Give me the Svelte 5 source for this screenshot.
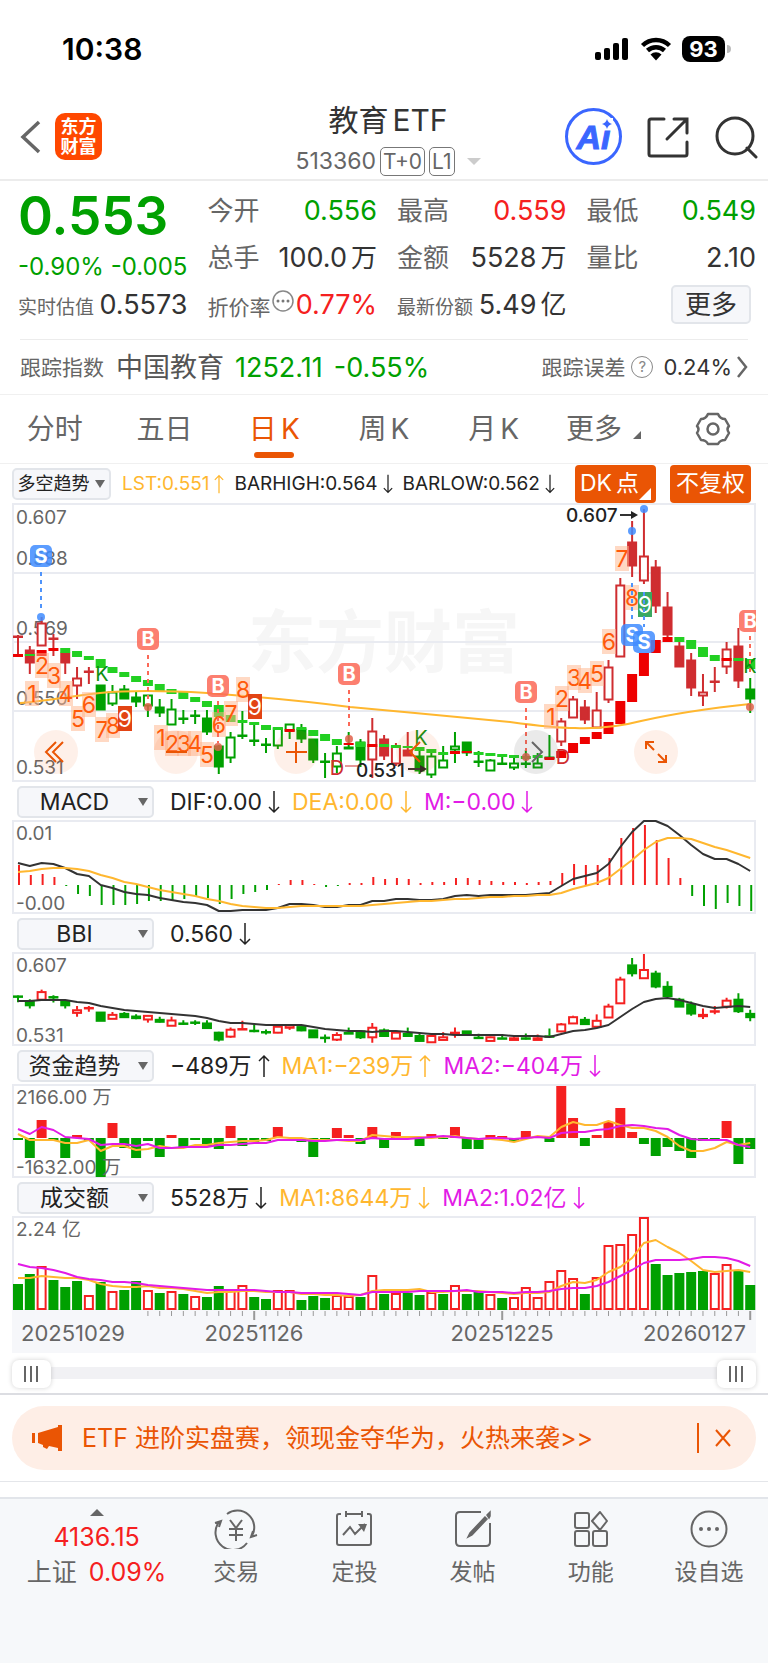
<script lang="ts">
  type Kind = 'r' | 'o' | 'g' | 'h';
  type Candle = [Kind, number, number, number, number, 'R' | 'G', number, number];

  // kind, high, body top, body bottom, low, trend colour, trend top, trend bottom
  const candles: Candle[] = [
    ['r', 132, 133, 134, 152, 'R', 151, 154],
    ['r', 143, 147, 160, 171, 'G', 151, 153],
    ['o', 114, 120, 143, 143, 'R', 147, 153],
    ['r', 131, 135, 136, 153, 'R', 145, 148],
    ['r', 147, 150, 160, 171, 'G', 145, 150],
    ['o', 164, 175, 183, 196, 'G', 148, 154],
    ['r', 164, 168, 169, 181, 'G', 153, 157],
    ['g', 182, 182, 207, 207, 'G', 156, 165],
    ['h', 182, 189, 201, 203, 'G', 164, 170],
    ['g', 182, 186, 196, 196, 'G', 169, 174],
    ['g', 189, 194, 199, 204, 'G', 173, 179],
    ['h', 192, 192, 203, 214, 'G', 177, 183],
    ['g', 196, 204, 210, 214, 'G', 181, 188],
    ['h', 196, 206, 222, 222, 'G', 186, 191],
    ['g', 207, 215, 216, 221, 'G', 189, 196],
    ['g', 207, 212, 213, 221, 'G', 194, 199],
    ['g', 207, 215, 229, 232, 'G', 198, 204],
    ['g', 242, 243, 264, 271, 'G', 202, 214],
    ['h', 229, 234, 255, 260, 'G', 212, 219],
    ['g', 208, 232, 233, 236, 'G', 217, 220],
    ['g', 219, 237, 238, 243, 'G', 219, 222],
    ['g', 235, 241, 242, 250, 'G', 222, 227],
    ['h', 225, 225, 243, 246, 'G', 224, 227],
    ['h', 221, 221, 228, 236, 'R', 226, 229],
    ['g', 221, 226, 236, 240, 'G', 224, 227],
    ['g', 236, 236, 257, 260, 'G', 227, 233],
    ['g', 250, 258, 259, 275, 'G', 231, 238],
    ['h', 243, 250, 264, 270, 'G', 236, 242],
    ['g', 229, 244, 246, 246, 'R', 240, 242],
    ['g', 236, 239, 257, 264, 'G', 239, 244],
    ['o', 215, 228, 257, 275, 'R', 241, 244],
    ['r', 232, 236, 253, 257, 'G', 241, 244],
    ['o', 240, 243, 261, 263, 'G', 242, 245],
    ['r', 229, 247, 253, 253, 'G', 243, 245],
    ['g', 247, 253, 268, 271, 'G', 244, 248],
    ['h', 250, 253, 272, 275, 'G', 246, 250],
    ['h', 243, 257, 265, 265, 'G', 249, 252],
    ['h', 229, 243, 247, 260, 'R', 248, 251],
    ['g', 239, 239, 250, 253, 'R', 248, 250],
    ['g', 248, 258, 259, 264, 'G', 249, 252],
    ['h', 256, 257, 268, 268, 'G', 250, 253],
    ['g', 251, 260, 261, 262, 'G', 251, 254],
    ['h', 253, 260, 265, 267, 'G', 252, 255],
    ['g', 247, 260, 261, 265, 'G', 253, 256],
    ['h', 250, 260, 265, 265, 'G', 252, 255],
    ['g', 232, 254, 255, 256, 'R', 254, 257],
    ['o', 215, 218, 239, 243, 'R', 248, 255],
    ['o', 193, 196, 215, 215, 'R', 240, 250],
    ['r', 197, 204, 217, 221, 'R', 234, 241],
    ['o', 189, 207, 225, 225, 'R', 229, 236],
    ['o', 157, 164, 197, 200, 'R', 219, 231],
    ['o', 75, 82, 154, 154, 'R', 198, 221],
    ['r', 18, 39, 63, 74, 'R', 171, 199],
    ['o', 6, 53, 78, 81, 'R', 150, 173],
    ['r', 57, 64, 103, 110, 'R', 137, 150],
    ['r', 89, 104, 132, 134, 'R', 134, 139],
    ['r', 139, 143, 164, 164, 'G', 134, 139],
    ['r', 150, 157, 185, 193, 'G', 137, 146],
    ['o', 171, 189, 193, 203, 'G', 144, 154],
    ['r', 164, 178, 179, 189, 'G', 152, 158],
    ['o', 139, 146, 164, 171, 'R', 155, 158],
    ['r', 125, 143, 178, 185, 'G', 155, 158],
    ['g', 175, 186, 196, 210, 'G', 156, 166]
  ];
  // dojis that closed up
  const risingDojis = [6, 19, 59];

  const step = 11.81;
  const cx = (i: number) => 6 + i * step;
  const line = (ys: number[]) => ys.map((y, i) => `${cx(i).toFixed(1)},${y}`).join(' ');
  const smallY = (y: number) => y * 0.33;

  const counts: [string, number, number, string][] = [
    ['1', 20, 190, ''], ['2', 30, 162, ''], ['3', 42, 172, ''], ['4', 54, 190, ''], ['5', 66, 215, ''],
    ['6', 77, 201, ''], ['7', 90, 226, ''], ['8', 101, 222, ''], ['9', 113, 215, 'top'],
    ['1', 149, 234, ''], ['2', 160, 240, ''], ['3', 172, 240, ''], ['4', 183, 240, ''], ['5', 195, 251, ''],
    ['6', 207, 221, ''], ['7', 219, 210, ''], ['8', 231, 186, ''], ['9', 243, 203, 'top'],
    ['1', 539, 213, ''], ['2', 550, 195, ''], ['3', 562, 174, ''], ['4', 573, 177, ''], ['5', 585, 170, ''],
    ['6', 597, 138, ''], ['7', 610, 55, ''], ['8', 620, 94, ''], ['9', 633, 101, 'low']
  ];

  // letter, x, badge centre, dash start, dash end, dot
  const signals: [string, number, number, number, number, number][] = [
    ['S', 29, 53, 69, 106, 114],
    ['B', 136, 136, 152, 198, 204],
    ['B', 206, 183, 198, 240, 244],
    ['B', 337, 171, 187, 226, 236],
    ['B', 514, 189, 205, 248, 254],
    ['B', 738, 118, 133, 170, 204],
    ['S', 620, 132, 80, 118, 28],
    ['S', 632, 139, 89, 124, 6]
  ];

  const tools: [string, number, string][] = [
    ['快退', 44, 'M22 12 12 22l10 10M29 12 19 22l10 10'],
    ['缩小', 164, 'M12 22h21'],
    ['放大', 284, 'M12 22h21M22 12v21'],
    ['左移', 406, 'M24 12 14 22l10 10'],
    ['右移', 524, 'M18 12l10 10-10 10'],
    ['全屏', 644, 'M20 20 12 12M12 19v-7h8M24 24l8 8M32 25v7h-8']
  ];

  const macd = [20, 10, 11, 8, -1, -9, -11, -20, -20, -20, -19, -16, -16, -15, -14, -12, -13, -19, -14, -9, -7, -5, 1, 5, 5, 1, -2, -1, 2, 2, 8, 6, 7, 6, 2, 3, 3, 7, 7, 5, 4, 3, 3, 2, 3, 4, 12, 21, 20, 20, 27, 47, 57, 60, 45, 27, 7, -11, -21, -24, -18, -21, -26];
  const dif = [43, 46, 43, 44, 48, 54, 56, 65, 68, 72, 74, 75, 78, 80, 82, 83, 85, 91, 91, 90, 90, 90, 88, 84, 84, 85, 87, 87, 85, 85, 81, 81, 79, 79, 80, 80, 79, 76, 75, 76, 75, 75, 75, 75, 74, 73, 66, 59, 56, 53, 44, 27, 12, 1, 1, 6, 15, 25, 34, 39, 39, 44, 51];
  const dea = [52, 51, 49, 48, 48, 49, 51, 55, 58, 62, 64, 67, 70, 72, 74, 76, 79, 81, 84, 86, 87, 88, 88, 87, 86, 86, 86, 86, 86, 86, 85, 84, 83, 82, 81, 81, 80, 79, 79, 78, 77, 77, 76, 76, 75, 75, 73, 69, 66, 63, 58, 49, 40, 30, 22, 18, 18, 19, 23, 27, 30, 34, 38];
  const bbi = [49, 49, 48, 48, 48, 50, 51, 54, 56, 58, 59, 60, 61, 62, 63, 64, 66, 69, 71, 71, 72, 73, 73, 73, 73, 75, 77, 78, 79, 79, 80, 79, 79, 80, 81, 82, 82, 83, 83, 83, 83, 83, 84, 84, 84, 85, 82, 79, 78, 76, 73, 65, 57, 50, 47, 46, 48, 51, 54, 56, 55, 54, 55];
  const flow = [-2, -20, 18, -3, -20, 3, -3, -39, 15, -10, -20, -3, -19, 3, -10, -2, -8, -11, 12, -8, -4, -3, 11, 1, -4, -19, -2, 10, 3, -6, 11, -10, 6, -1, -8, 4, -1, 11, -11, -11, 3, 2, -3, 7, 1, -4, 52, 20, -8, 3, 16, 30, 6, -6, -18, -9, -13, -20, -3, -3, 17, -26, -11];
  const flowMa1 = [50, 56, 56, 56, 59, 59, 56, 67, 62, 62, 66, 65, 62, 64, 64, 61, 61, 59, 58, 57, 57, 56, 53, 54, 54, 56, 56, 56, 57, 57, 51, 52, 53, 53, 53, 54, 53, 52, 54, 55, 55, 56, 58, 55, 52, 53, 43, 38, 41, 41, 37, 41, 44, 44, 47, 53, 62, 67, 67, 64, 58, 61, 59];
  const flowMa2 = [45, 50, 43, 46, 53, 54, 55, 61, 60, 60, 62, 60, 64, 64, 63, 63, 63, 61, 61, 60, 59, 59, 56, 56, 56, 57, 57, 56, 56, 56, 54, 55, 55, 55, 54, 53, 52, 53, 54, 55, 54, 54, 55, 54, 53, 54, 49, 48, 48, 46, 45, 42, 41, 42, 44, 45, 51, 55, 56, 56, 56, 61, 63];
  // turnover, positive = up day, negative = down day
  const volume = [-26, -36, 44, -30, -23, -29, 15, -28, 19, -20, -29, 20, -17, 19, -16, 14, -13, -24, 20, 25, -13, -11, 20, 20, -10, -14, -12, 15, 14, -13, 35, -16, 17, -17, -15, 18, -16, 25, -16, -18, 16, -12, 13, 23, 13, 29, 40, 32, -16, 33, 65, 66, 76, 93, -46, -35, -37, -38, -39, 37, 46, -40, -25];
  const volMa1 = [62, 62, 60, 61, 62, 62, 64, 68, 70, 71, 71, 70, 72, 72, 73, 75, 77, 76, 76, 75, 75, 76, 76, 76, 78, 78, 79, 79, 80, 79, 75, 74, 74, 74, 73, 76, 76, 75, 75, 75, 76, 77, 78, 77, 77, 76, 70, 66, 67, 64, 56, 51, 42, 27, 24, 31, 37, 45, 54, 56, 55, 54, 56];
  const volMa2 = [48, 51, 52, 54, 57, 61, 63, 64, 66, 66, 67, 69, 70, 71, 72, 73, 74, 74, 74, 74, 74, 75, 76, 76, 77, 77, 77, 77, 78, 79, 76, 76, 76, 76, 75, 75, 75, 75, 74, 76, 76, 76, 77, 76, 76, 75, 73, 72, 72, 70, 66, 60, 54, 47, 44, 44, 44, 43, 41, 41, 42, 45, 50];

  const tabs = [['分时', ''], ['五日', ''], ['日', 'K'], ['周', 'K'], ['月', 'K']];
  let active = 2;
</script>

{#snippet arrow(dir: string)}
  <svg class="arrow" class:up={dir === 'up'} viewBox="0 0 12 24" aria-hidden="true"><path d="M6 1v21M1 17l5 5 5-5" /></svg>
{/snippet}

{#snippet picker(name: string)}
  <span class="picker">
    <select aria-label="指标"><option>{name}</option></select>
  </span>
{/snippet}

<div class="page">
  <div class="status">
    <span class="clock">10:38</span>
    <div class="status-icons">
      <svg width="36" height="24" viewBox="0 0 36 24" aria-hidden="true">
        <rect x="1" y="15" width="6" height="8" rx="2" /><rect x="10" y="11" width="6" height="12" rx="2" />
        <rect x="19" y="6" width="6" height="17" rx="2" /><rect x="28" y="1" width="6" height="22" rx="2" />
      </svg>
      <svg width="32" height="24" viewBox="0 0 32 24" aria-hidden="true">
        <path d="M2.500 8.500a19.500 19.500 0 0 1 27 0M7.500 13.500a12.500 12.500 0 0 1 17 0" fill="none" stroke="#000" stroke-width="4.500" />
        <path d="M10.500 17.500a8 8 0 0 1 11 0L16 23.500z" />
      </svg>
      <span class="battery">93</span>
    </div>
  </div>

  <header>
    <div class="side">
      <button class="plain" aria-label="返回">
        <svg width="24" height="36" viewBox="0 0 24 36"><path d="M21 3 5 18l16 15" fill="none" stroke="#666" stroke-width="3.500" /></svg>
      </button>
      <span class="logo">东方<br />财富</span>
    </div>
    <div class="title">
      <h1>教育<em>ETF</em></h1>
      <p>513360 <span class="tag">T+0</span><span class="tag">L1</span><i class="down"></i></p>
    </div>
    <div class="side end">
      <button class="plain ai" aria-label="Ai">
        <span>Ai</span>
        <svg class="spark" width="12" height="12" viewBox="0 0 12 12"><path d="M6 1q1 4 5 5-4 1-5 5-1-4-5-5 4-1 5-5z" /></svg>
      </button>
      <button class="plain" aria-label="分享">
        <svg width="44" height="44" viewBox="0 0 44 44" fill="none" stroke="#333" stroke-width="3" stroke-linecap="round"><path d="M18 4H5q-2 0-2 2v33q0 2 2 2h34q2 0 2-2V27M28 4h13v14M40 5 21 24" /></svg>
      </button>
      <button class="plain" aria-label="搜索">
        <svg width="44" height="44" viewBox="0 0 44 44" fill="none" stroke="#333" stroke-width="3" stroke-linecap="round"><circle cx="21" cy="21" r="18" /><path d="m33 33 9 9" /></svg>
      </button>
    </div>
  </header>

  <section class="quote">
    <div class="grid">
      <div class="last">
        <strong>0.553</strong>
        <span class="green">-0.90% -0.005</span>
      </div>
      <div class="cell"><span>今开</span><b class="green">0.556</b></div>
      <div class="cell"><span>最高</span><b class="red">0.559</b></div>
      <div class="cell"><span>最低</span><b class="green">0.549</b></div>
      <div class="cell"><span>总手</span><b>100.0<em>万</em></b></div>
      <div class="cell"><span>金额</span><b>5528<em>万</em></b></div>
      <div class="cell"><span>量比</span><b>2.10</b></div>
      <div class="cell small"><span>实时估值</span><b>0.5573</b></div>
      <div class="cell small mid">
        <span>折价率</span>
        <svg class="dots" width="22" height="22" viewBox="0 0 22 22"><circle cx="11" cy="11" r="10" fill="none" stroke="#888" stroke-width="1.500" /><g fill="#777"><circle cx="6" cy="11" r="1.500" /><circle cx="11" cy="11" r="1.500" /><circle cx="16" cy="11" r="1.500" /></g></svg>
        <b class="red">0.77%</b>
      </div>
      <div class="cell small"><span>最新份额</span><b>5.49<em>亿</em></b></div>
      <div class="cell right"><button class="more">更多</button></div>
    </div>
    <div class="track">
      <span class="label">跟踪指数</span>
      <span class="index">中国教育</span>
      <span class="num green">1252.11</span>
      <span class="num green">-0.55%</span>
      <a href="#error" class="error">
        <span class="label">跟踪误差</span>
        <i class="help">?</i>
        <span>0.24%</span>
        <svg width="12" height="24" viewBox="0 0 12 24"><path d="m2 2 8 10-8 10" fill="none" stroke="#666" stroke-width="2.500" /></svg>
      </a>
    </div>
  </section>

  <nav class="tabs">
    {#each tabs as [name, suffix], i}
      <button class:active={active === i} on:click={() => (active = i)}>{name}{#if suffix}<em>{suffix}</em>{/if}</button>
    {/each}
    <button class="corner">更多</button>
    <button aria-label="设置">
      <svg width="36" height="36" viewBox="0 0 36 36" fill="none" stroke="#666" stroke-width="2.500"><path d="M13 3h10q2 5 7 5l4 7q-3 3 0 7l-4 7q-5 0-7 4H13q-2-4-7-4l-4-7q3-4 0-7l4-7q5 0 7-5z" stroke-linejoin="round" /><circle cx="18" cy="18" r="5.500" /></svg>
    </button>
  </nav>

  <div class="main-head">
    <span class="picker trend"><select aria-label="主图指标"><option>多空趋势</option></select></span>
    <div class="values">
      <span class="gold">LST:0.551{@render arrow('up')}</span>
      <span>BARHIGH:0.564{@render arrow('down')}</span>
      <span>BARLOW:0.562{@render arrow('down')}</span>
    </div>
    <button class="pill dk">DK<em>点</em></button>
    <button class="pill">不复权</button>
  </div>

  <main>
    <div class="kline">
      <svg class="chart" viewBox="0 0 744 279">
        <text class="watermark" x="236" y="164">东方财富</text>
        <g class="frame"><rect x="1" y="1" width="742" height="277" /><path d="M0 70h744M0 139h744M0 208h744" /></g>
        <g class="axis">
          <text x="4" y="21">0.607</text><text x="4" y="62">0.588</text><text x="4" y="132">0.569</text>
          <text x="4" y="202">0.550</text><text x="4" y="271">0.531</text>
        </g>
        {#each candles as [kind, high, top, bottom, low, trend, t0, t1], i}
          <g class="candle {kind}">
            <path d="M{cx(i)} {high}V{top}M{cx(i)} {bottom}V{low}" />
            <rect x={cx(i) - 4} y={top + 0.5} width="8" height={Math.max(bottom - top - 1, 0.5)} />
          </g>
          <rect class="bar {trend}" x={cx(i) - 5} y={t0} width="10" height={t1 - t0} />
        {/each}
        <path class="ma gold" d="M8 200C35 198 60 193 88 190C120 187 160 188 195 190C250 194 300 199 338 204C390 209 450 214 498 219C520 222 545 225 563 225C590 226 610 223 629 218C660 211 700 205 738 201" />
        {#each counts as [n, x, y, style]}
          <g class="count {style}"><rect x={x - 7} y={y - 12} width="14" height="25" /><text {x} y={y + 9}>{n}</text></g>
        {/each}
        <g class="mark"><text x="90" y="178">K</text><text x="409" y="242">K</text><text x="738" y="170">K</text></g>
        <g class="mark d"><text x="325" y="272">D</text><text x="551" y="261">D</text><path d="M333 263h13" /></g>
        {#each signals as [letter, x, y, d0, d1, dot]}
          <g class="signal {letter}">
            <path d="M{x} {d0}V{d1}" />
            <circle cx={x} cy={dot} r="4" />
            <rect x={x - 11} y={y - 11} width="22" height="22" rx="5" />
            <text {x} y={y + 7}>{letter}</text>
          </g>
        {/each}
        <g class="extreme">
          <text x="344" y="274">0.531</text><path d="M396 266h14" /><path class="tip" d="m408 262 7 4-7 4z" />
          <text x="554" y="19">0.607</text><path d="M608 12h14" /><path class="tip" d="m619 8 7 4-7 4z" />
        </g>
      </svg>
      {#each tools as [label, x, icon]}
        <button class="tool" class:grey={label === '右移'} aria-label={label} style="left: {(x / 744) * 100}%">
          <svg viewBox="0 0 44 44"><path d={icon} /></svg>
        </button>
      {/each}
    </div>

    <div class="sub-head">
      {@render picker('MACD')}
      <div class="values"><span>DIF:0.00{@render arrow('down')}</span><span class="gold">DEA:0.00{@render arrow('down')}</span><span class="pink">M:−0.00{@render arrow('down')}</span></div>
    </div>
    <svg class="chart" viewBox="0 0 744 94">
      <g class="frame"><rect x="1" y="1" width="742" height="92" /></g>
      {#each macd as v, i}
        <path class={v > 0 ? 'stick up' : 'stick'} d="M{cx(i) + 1} 65V{65 - v}" />
      {/each}
      <polyline class="ma" points={line(dif)} /><polyline class="ma gold" points={line(dea)} />
      <g class="axis"><text x="4" y="20">0.01</text><text x="4" y="90">-0.00</text></g>
    </svg>

    <div class="sub-head">
      {@render picker('BBI')}
      <div class="values"><span>0.560{@render arrow('down')}</span></div>
    </div>
    <svg class="chart" viewBox="0 0 744 94">
      <g class="frame"><rect x="1" y="1" width="742" height="92" /></g>
      {#each candles as [kind, high, top, bottom, low], i}
        {@const up = kind === 'o' || kind === 'h' || risingDojis.includes(i)}
        <g class="candle {up ? 'up' : 'g'}">
          <path d="M{cx(i)} {smallY(high)}V{smallY(top)}M{cx(i)} {smallY(bottom)}V{smallY(low)}" />
          <rect x={cx(i) - 4} y={smallY(top) + 0.5} width="8" height={Math.max(smallY(bottom) - smallY(top), 0.5)} />
        </g>
      {/each}
      <polyline class="ma" points={line(bbi)} />
      <g class="axis"><text x="4" y="20">0.607</text><text x="4" y="90">0.531</text></g>
    </svg>

    <div class="sub-head">
      {@render picker('资金趋势')}
      <div class="values"><span>−489万{@render arrow('up')}</span><span class="gold">MA1:−239万{@render arrow('up')}</span><span class="pink">MA2:−404万{@render arrow('down')}</span></div>
    </div>
    <svg class="chart" viewBox="0 0 744 94">
      <g class="frame"><rect x="1" y="1" width="742" height="92" /></g>
      {#each flow as v, i}
        <rect class={v > 0 ? 'fill-up' : 'fill-down'} x={cx(i) - 5} y={v > 0 ? 54 - v : 54} width="10" height={Math.abs(v)} />
      {/each}
      <polyline class="ma gold" points={line(flowMa1)} /><polyline class="ma pink" points={line(flowMa2)} />
      <g class="axis"><text x="4" y="20">2166.00 万</text><text x="4" y="90">-1632.00 万</text></g>
    </svg>

    <div class="sub-head">
      {@render picker('成交额')}
      <div class="values"><span>5528万{@render arrow('down')}</span><span class="gold">MA1:8644万{@render arrow('down')}</span><span class="pink">MA2:1.02亿{@render arrow('down')}</span></div>
    </div>
    <svg class="chart" viewBox="0 0 744 137">
      <g class="frame"><rect x="1" y="1" width="742" height="93" /></g>
      <rect class="dates" y="94" width="744" height="43" />
      {#each volume as v, i}
        {#if v > 0}
          <rect class="hollow" x={cx(i) - 4} y={95 - v} width="8" height={v - 2} />
        {:else}
          <rect class="fill-down" x={cx(i) - 5} y={94 + v} width="10" height={-v} />
        {/if}
        {#if i > 10}
          <path class="tick" d="M{cx(i)} 95v{i % 21 === 20 ? 9 : 5}" stroke-width={i % 21 === 20 ? 2 : 1} />
        {/if}
      {/each}
      <polyline class="ma gold" points={line(volMa1)} /><polyline class="ma pink" points={line(volMa2)} />
      <g class="axis"><text x="4" y="20">2.24 亿</text></g>
      <g class="axis date">
        <text x="9" y="125">20251029</text><text x="242" y="125" text-anchor="middle">20251126</text>
        <text x="490" y="125" text-anchor="middle">20251225</text><text x="734" y="125" text-anchor="end">20260127</text>
      </g>
    </svg>

    <div class="range">
      <input type="range" aria-label="开始日期" min="0" max="100" value="0" />
      <input type="range" aria-label="结束日期" min="0" max="100" value="100" />
    </div>
  </main>

  <div class="promo-wrap">
    <div class="promo">
      <svg width="30" height="26" viewBox="0 0 30 26" aria-hidden="true"><path d="M0 8h3v10H0zM6 8 26 2V0h4v26h-4v-3l-9-2-2 3-4-2v-2l-5-2z" /></svg>
      <a href="#promo">ETF 进阶实盘赛，领现金夺华为，火热来袭&gt;&gt;</a>
      <button class="plain close" aria-label="关闭">
        <svg width="18" height="22" viewBox="0 0 18 22"><path d="m2 3 14 16M16 3 2 19" fill="none" stroke="#ea5504" stroke-width="2" /></svg>
      </button>
    </div>
  </div>

  <footer>
    <button class="market">
      <i class="up"></i>
      <span class="red">4136.15</span>
      <span>上证<b class="red">0.09%</b></span>
    </button>
    <button>
      <svg viewBox="0 0 44 40"><path d="M13 5a17 17 0 0 1 25 22M33 34A17 17 0 0 1 5 13M1 14l6-2-2 6M43 26l-6 2 2-6M16 11l6 8 6-8M15 20h14M15 26h14M22 19v13" /></svg>
      <span>交易</span>
    </button>
    <button>
      <svg viewBox="0 0 44 40"><path d="M9 5H7q-2 0-2 2v27q0 2 2 2h30q2 0 2-2V7q0-2-2-2h-2M14 5h16M14 2v6M30 2v6M11 26l7-8 5 7 10-10" /><path d="M26 15h9l-3 8z" fill="#666" stroke="none" /></svg>
      <span>定投</span>
    </button>
    <button>
      <svg viewBox="0 0 44 40"><path d="M30 3H9Q5 3 5 7v26q0 4 4 4h26q4 0 4-4V14" /><path d="M34 8 19 24l-2 4 4-2 15-16zM36 6l3-3v4l-1 2z" fill="#666" stroke-width="1.500" /></svg>
      <span>发帖</span>
    </button>
    <button>
      <svg viewBox="0 0 44 40"><rect x="6" y="4" width="14" height="15" rx="2" /><path d="m31 3 7 9-7 9-8-9z" stroke-linejoin="round" /><rect x="6" y="22" width="14" height="15" rx="2" /><rect x="24" y="22" width="14" height="15" rx="2" /></svg>
      <span>功能</span>
    </button>
    <button>
      <svg viewBox="0 0 44 40"><circle cx="22" cy="20" r="17.500" /><g fill="#666" stroke="none"><circle cx="14" cy="20" r="2" /><circle cx="22" cy="20" r="2" /><circle cx="30" cy="20" r="2" /></g></svg>
      <span>设自选</span>
    </button>
  </footer>
</div>

<style>
  :global(body) {
    background: #fff;
  }

  .page {
    --green: #00a000;
    --red: #f52020;
    --gold: #ffb72f;
    --pink: #e21be6;
    --orange: #ea5504;
    font-family: Inter, 'Noto Sans CJK SC', sans-serif;
    color: #333;
    line-height: 1;
  }

  button,
  select {
    font: inherit;
    color: inherit;
    border: 0;
    background: none;
    padding: 0;
    margin: 0;
    cursor: pointer;
  }

  a {
    color: inherit;
    text-decoration: none;
  }

  b {
    font-weight: 400;
  }

  em {
    margin-left: 4px;
    font-style: normal;
  }

  .plain svg {
    display: block;
  }

  .green {
    color: var(--green);
  }

  .red {
    color: var(--red);
  }

  /* status bar */
  .status {
    height: 98px;
    box-sizing: border-box;
    display: flex;
    justify-content: space-between;
    align-items: center;
    padding: 0 43px 0 62px;
    color: #000;
  }

  .clock {
    font-size: 30px;
    font-weight: 600;
  }

  .status-icons {
    display: flex;
    align-items: center;
    gap: 10px;
  }

  .battery {
    position: relative;
    width: 43px;
    height: 26px;
    line-height: 26px;
    border-radius: 8px;
    background: #000;
    color: #fff;
    font-size: 22px;
    font-weight: 700;
    text-align: center;
  }

  .battery::after {
    content: '';
    position: absolute;
    right: -6px;
    top: 9px;
    width: 4px;
    height: 8px;
    border-radius: 0 4px 4px 0;
    background: #bbb;
  }

  /* title bar */
  header {
    height: 83px;
    box-sizing: border-box;
    display: grid;
    grid-template-columns: 1fr auto 1fr;
    align-items: center;
    padding: 0 10px 4px 18px;
    border-bottom: 2px solid #ececec;
  }

  .side {
    display: flex;
    align-items: center;
    gap: 13px;
    padding-bottom: 5px;
  }

  .end {
    justify-content: flex-end;
    gap: 24px;
  }

  .logo {
    width: 47px;
    height: 47px;
    box-sizing: border-box;
    padding-top: 4px;
    border-radius: 10px;
    background: #ff4800;
    color: #fff;
    font-size: 18px;
    font-weight: 700;
    line-height: 20px;
    text-align: center;
  }

  .title {
    text-align: center;
  }

  h1 {
    margin: 0;
    font-size: 30px;
    font-weight: 400;
    line-height: 44px;
  }

  .title p {
    margin: 0;
    display: flex;
    align-items: center;
    justify-content: center;
    gap: 4px;
    height: 38px;
    color: #666;
    font-size: 23px;
  }

  .tag {
    border: 1px solid #777;
    border-radius: 5px;
    padding: 0 2px;
    font-size: 21px;
    line-height: 27px;
  }

  .down {
    margin-left: 8px;
    border: 7px solid transparent;
    border-top-color: #ccc;
    border-bottom: 0;
  }

  .ai {
    position: relative;
    width: 57px;
    height: 57px;
    box-sizing: border-box;
    border: 3px solid #3a66ff;
    border-radius: 50%;
    color: #3a66ff;
    font-family: 'Liberation Sans', sans-serif;
    font-size: 34px;
    font-weight: 700;
    font-style: italic;
    -webkit-text-stroke: 1px #3a66ff;
  }

  .ai span {
    display: block;
  }

  .spark {
    position: absolute;
    right: 6px;
    top: 7px;
    fill: #3a66ff;
    background: #fff;
  }

  /* quote */
  .quote {
    border-bottom: 1px solid #f0f0f0;
  }

  .grid {
    display: grid;
    grid-template-columns: repeat(4, 1fr);
    grid-template-rows: 47px 47px 47px;
    column-gap: 20px;
    padding: 6px 12px 11px 18px;
  }

  .last {
    grid-row: span 2;
    display: flex;
    flex-direction: column;
    gap: 12px;
    padding-top: 3px;
    color: var(--green);
    white-space: nowrap;
  }

  .last strong {
    font-size: 53px;
    font-weight: 600;
  }

  .last span {
    font-size: 24px;
  }

  .cell {
    display: flex;
    align-items: center;
    justify-content: space-between;
    white-space: nowrap;
    font-size: 26px;
  }

  .cell b {
    font-size: 27px;
  }

  .cell em {
    font-size: 26px;
  }

  .cell span {
    color: #666;
  }

  .small span {
    font-size: 19px;
    padding-top: 6px;
  }

  .mid span {
    font-size: 21px;
  }

  .dots {
    align-self: flex-start;
    margin-top: 9px;
  }

  .right {
    justify-content: flex-end;
  }

  .more {
    width: 80px;
    height: 39px;
    margin-right: 5px;
    border: 2px solid #e2e5ea;
    border-radius: 5px;
    background: #f6f7fa;
    font-size: 26px;
  }

  .track {
    display: flex;
    align-items: center;
    height: 54px;
    margin: 0 20px;
    border-top: 1px solid #ececec;
    font-size: 26px;
    white-space: nowrap;
  }

  .label {
    color: #666;
    font-size: 21px;
  }

  .index {
    margin: 0 11px 0 12px;
    font-size: 27px;
    color: #555;
  }

  .num {
    font-size: 27px;
    margin-right: 11px;
  }

  .error {
    flex: 1;
    display: flex;
    align-items: center;
    justify-content: flex-end;
    gap: 4px;
    font-size: 22px;
  }

  .help {
    width: 20px;
    height: 20px;
    margin: 0 6px 0 2px;
    border: 1px solid #888;
    border-radius: 50%;
    color: #888;
    font-size: 15px;
    font-style: normal;
    line-height: 20px;
    text-align: center;
  }

  /* period tabs */
  .tabs {
    display: grid;
    grid-template-columns: repeat(7, 1fr);
    height: 69px;
    border-bottom: 1px solid #f0f0f0;
    box-sizing: border-box;
  }

  .tabs button {
    position: relative;
    color: #666;
    font-size: 28px;
  }

  .tabs svg {
    display: block;
    margin: 0 auto;
  }

  .tabs .active {
    color: var(--orange);
  }

  .tabs .active::after {
    content: '';
    position: absolute;
    left: calc(50% - 20px);
    bottom: 5px;
    width: 40px;
    height: 6px;
    border-radius: 3px;
    background: var(--orange);
  }

  .corner::after {
    content: '';
    display: inline-block;
    margin-left: 11px;
    border-left: 8px solid transparent;
    border-bottom: 8px solid #666;
  }

  /* indicator rows */
  .main-head {
    display: flex;
    align-items: center;
    height: 39px;
    padding: 0 17px 0 12px;
    font-size: 19px;
  }

  .picker {
    position: relative;
    flex: none;
    width: 137px;
    height: 32px;
  }

  .picker select {
    appearance: none;
    width: 100%;
    height: 100%;
    box-sizing: border-box;
    padding-right: 22px;
    border: 2px solid #e2e5ea;
    border-radius: 5px;
    background: #f6f7fa;
    color: #222;
    font-size: 23px;
    line-height: 28px;
    text-align: center;
    text-align-last: center;
  }

  .picker::after {
    content: '';
    position: absolute;
    right: 6px;
    top: 12px;
    border: 5px solid transparent;
    border-top: 8px solid #666;
    border-bottom: 0;
    pointer-events: none;
  }

  .trend {
    width: 99px;
  }

  .trend select {
    padding-right: 16px;
    font-size: 18px;
  }

  .values {
    display: flex;
    flex: 1;
    color: #222;
    white-space: nowrap;
  }

  .values span {
    display: flex;
    align-items: center;
  }

  .main-head .values {
    gap: 10px;
    margin-left: 11px;
  }

  .values .gold {
    color: var(--gold);
  }

  .values .pink {
    color: var(--pink);
  }

  .arrow {
    width: 10px;
    height: 20px;
    margin-left: 5px;
    fill: none;
    stroke: currentColor;
    stroke-width: 1.5;
  }

  .arrow.up {
    transform: rotate(180deg);
  }

  .pill {
    flex: none;
    position: relative;
    width: 81px;
    height: 38px;
    margin-left: 14px;
    border-radius: 4px;
    background: var(--orange);
    color: #fff;
    font-size: 23px;
  }

  .dk {
    padding-right: 12px;
  }

  .dk::after {
    content: '';
    position: absolute;
    right: 5px;
    bottom: 3px;
    border-left: 12px solid transparent;
    border-bottom: 12px solid #fff;
  }

  main {
    padding: 0 12px;
  }

  .sub-head {
    display: flex;
    align-items: center;
    gap: 16px;
    height: 38px;
    box-sizing: border-box;
    padding: 2px 0 0 5px;
    font-size: 23px;
  }

  .sub-head .values {
    gap: 12px;
  }

  .sub-head .arrow {
    width: 12px;
    height: 24px;
    margin-left: 6px;
  }

  /* charts */
  .chart {
    display: block;
    width: 100%;
  }

  .kline {
    position: relative;
  }

  .watermark {
    fill: #f6f6f6;
    font-size: 68px;
    font-weight: 700;
  }

  .frame {
    fill: none;
    stroke: #e9ebf1;
    stroke-width: 2;
  }

  .axis {
    fill: #666;
    font-size: 19px;
  }

  .date {
    font-size: 22px;
  }

  .dates {
    fill: #f6f7fa;
  }

  .candle {
    stroke-width: 2;
    fill: none;
  }

  .r {
    stroke: #cf2d30;
    fill: #cf2d30;
  }

  .o {
    stroke: #cf2d30;
  }

  .g {
    stroke: var(--green);
    fill: var(--green);
  }

  .h {
    stroke: var(--green);
  }

  .candle.up {
    stroke: var(--red);
  }

  .o rect,
  .h rect,
  .candle.up rect {
    fill: #fff;
  }

  .bar.R {
    fill: #ee0000;
  }

  .bar.G {
    fill: #22d022;
  }

  .ma {
    fill: none;
    stroke: #333;
    stroke-width: 2;
    stroke-linejoin: round;
  }

  .ma.gold {
    stroke: var(--gold);
  }

  .ma.pink {
    stroke: var(--pink);
  }

  .count rect {
    fill: #ffb38a;
    opacity: 0.5;
  }

  .count text {
    fill: #ff5a0a;
    font-size: 23px;
    text-anchor: middle;
  }

  .count.top rect {
    fill: #e24414;
    opacity: 1;
  }

  .count.low rect {
    fill: #3aa860;
    opacity: 1;
  }

  .count.top text,
  .count.low text {
    fill: #fff;
  }

  .mark {
    fill: #109010;
    font-size: 20px;
    text-anchor: middle;
  }

  .mark.d {
    fill: #cf2d30;
    stroke: none;
  }

  .mark path {
    stroke: #cf2d30;
    stroke-width: 1;
  }

  .signal path {
    stroke-width: 2;
    stroke-dasharray: 4 4;
  }

  .signal rect,
  .signal circle {
    opacity: 0.85;
  }

  .signal text {
    fill: #fff;
    font-size: 20px;
    font-weight: 700;
    text-anchor: middle;
  }

  .S {
    fill: #3f8cff;
    stroke: none;
  }

  .S path {
    stroke: #4f94fb;
  }

  .B {
    fill: #fc6857;
  }

  .B path {
    stroke: #fc6857;
  }

  .B circle {
    fill: #e0604a;
  }

  .extreme {
    fill: #222;
    font-size: 19px;
    font-weight: 500;
  }

  .extreme path {
    stroke: #333;
    stroke-width: 2;
  }

  .extreme .tip {
    stroke: none;
  }

  .stick {
    stroke: var(--green);
    stroke-width: 2;
  }

  .stick.up {
    stroke: var(--red);
  }

  .fill-up {
    fill: var(--red);
  }

  .fill-down {
    fill: var(--green);
  }

  .hollow {
    fill: #fff;
    stroke: var(--red);
    stroke-width: 2;
  }

  .tick {
    stroke: #999;
  }

  .tool {
    position: absolute;
    bottom: 8px;
    width: 44px;
    height: 44px;
    margin-left: -22px;
    border-radius: 50%;
    background: rgb(250 110 40 / 0.1);
  }

  .tool svg {
    display: block;
    fill: none;
    stroke: var(--orange);
    stroke-width: 2;
  }

  .tool.grey {
    background: rgb(90 90 90 / 0.13);
  }

  .tool.grey svg {
    stroke: #666;
  }

  /* date range */
  .range {
    display: grid;
    align-items: center;
    height: 40px;
    padding-top: 1px;
    box-sizing: border-box;
    background: linear-gradient(#f1f1f4, #f1f1f4) center / 100% 12px no-repeat;
  }

  .range input {
    appearance: none;
    grid-area: 1 / 1;
    width: 100%;
    height: 28px;
    margin: 0;
    background: none;
    pointer-events: none;
  }

  .range input::-webkit-slider-thumb {
    appearance: none;
    width: 39px;
    height: 28px;
    border-radius: 7px;
    background:
      linear-gradient(#666, #666) 12px center / 2px 16px no-repeat,
      linear-gradient(#666, #666) 18px center / 2px 16px no-repeat,
      linear-gradient(#666, #666) 24px center / 2px 16px no-repeat,
      #fff;
    box-shadow: 0 0 5px rgb(0 0 0 / 0.18);
    pointer-events: auto;
  }

  /* promo */
  .promo-wrap {
    padding: 11px 12px;
    border-top: 2px solid #dcdde2;
    border-bottom: 1px solid #e4e6ea;
  }

  .promo {
    display: flex;
    align-items: center;
    gap: 20px;
    height: 64px;
    padding: 0 24px 0 20px;
    border-radius: 32px;
    background: #feeee6;
    color: var(--orange);
    font-size: 25px;
  }

  .promo > svg {
    flex: none;
    fill: var(--orange);
  }

  .promo a {
    flex: 1;
    white-space: nowrap;
  }

  .close {
    padding: 4px 0 4px 15px;
    border-left: 2px solid var(--orange);
  }

  /* bottom bar */
  footer {
    display: grid;
    grid-template-columns: 3fr 2fr 2fr 2fr 2fr 2fr;
    margin-top: 15px;
    padding: 10px 0 79px;
    border-top: 2px solid #e2e5ea;
    background: #f6f8fa;
    color: #666;
    font-size: 23px;
  }

  footer button {
    display: flex;
    flex-direction: column;
    align-items: center;
    gap: 11px;
    white-space: nowrap;
  }

  footer button > svg {
    width: 44px;
    height: 40px;
    fill: none;
    stroke: #666;
    stroke-width: 2;
  }

  footer button > span {
    line-height: 24px;
  }

  footer .market {
    gap: 0;
    padding-left: 16px;
    font-size: 25px;
  }

  .market b {
    margin-left: 12px;
  }

  .market i {
    margin-bottom: 9px;
    border: 7px solid transparent;
    border-top: 0;
    border-bottom: 7px solid #666;
  }

  .market i + span {
    margin-bottom: 11px;
  }
</style>
